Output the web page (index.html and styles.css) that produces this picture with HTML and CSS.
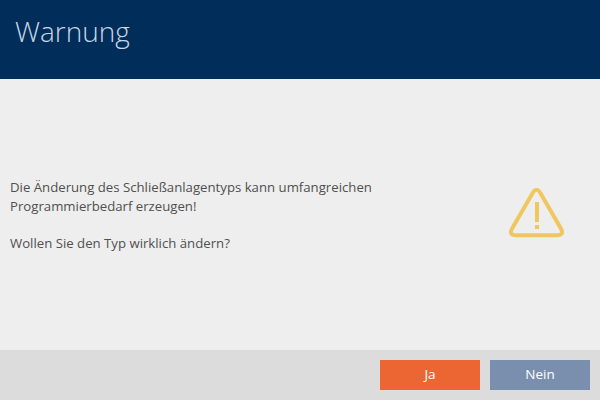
FILE: index.html
```html
<!DOCTYPE html>
<html lang="de">
<head>
    <meta charset="UTF-8">
    <title>Warnung</title>
    <link rel="stylesheet" href="styles.css">
</head>
<body>
    <div class="dialog">
        <div class="dialog-header">
            <h1>Warnung</h1>
        </div>
        <div class="dialog-body">
            <div class="message">
                <p>Die Änderung des Schließanlagentyps kann umfangreichen Programmierbedarf erzeugen!</p>
                <p>Wollen Sie den Typ wirklich ändern?</p>
            </div>
            <svg class="warning-icon" width="56" height="50" viewBox="0 0 56 50" fill="none">
                <path d="M23.5 5.2 Q27.5 -1.71 31.5 5.2 L51.75 40.32 Q55.75 47.25 47.75 47.25 L7.25 47.25 Q-0.75 47.25 3.25 40.32 Z" stroke="#f0c75e" stroke-width="4" stroke-linejoin="round"/>
                <rect x="26" y="14" width="4" height="20" fill="#f0c75e"/>
                <rect x="26" y="37" width="4" height="4" fill="#f0c75e"/>
            </svg>
        </div>
        <div class="dialog-footer">
            <button class="btn btn-yes">Ja</button>
            <button class="btn btn-no">Nein</button>
        </div>
    </div>
</body>
</html>
```

FILE: styles.css
```css
html, body {
    margin: 0;
    height: 100%;
}
body {
    font-family: "Open Sans", "Noto Sans", sans-serif;
    background-color: #eeeeee;
    overflow: hidden;
}
.dialog {
    display: flex;
    flex-direction: column;
    height: 400px;
}
.dialog-header {
    height: 79px;
    background-color: #002d5a;
    padding: 11px 15px 0;
    box-sizing: border-box;
}
.dialog-header h1 {
    margin: 0;
    font-size: 28px;
    line-height: 40px;
    font-weight: 300;
    color: #c7d6e4;
}
.dialog-body {
    flex: 1;
    display: flex;
    align-items: center;
    justify-content: space-between;
    padding: 0 35px 0 10px;
}
.message {
    width: 390px;
    padding-top: 1px;
    font-size: 13.2px;
    line-height: 19px;
    color: #505050;
}
.message p {
    margin: 0 0 18px;
}
.message p:last-child {
    margin-bottom: 0;
}
.warning-icon {
    margin-bottom: 3px;
}
.dialog-footer {
    height: 50px;
    background-color: #dcdcdc;
    display: flex;
    justify-content: flex-end;
    align-items: center;
    gap: 10px;
    padding: 0 10px;
    box-sizing: border-box;
}
.btn {
    width: 100px;
    height: 30px;
    border: none;
    padding: 0 0 2px;
    color: white;
    font-family: inherit;
    font-size: 13.5px;
}
.btn-yes {
    background-color: #ec6633;
}
.btn-no {
    background-color: #7a8fae;
}
```
